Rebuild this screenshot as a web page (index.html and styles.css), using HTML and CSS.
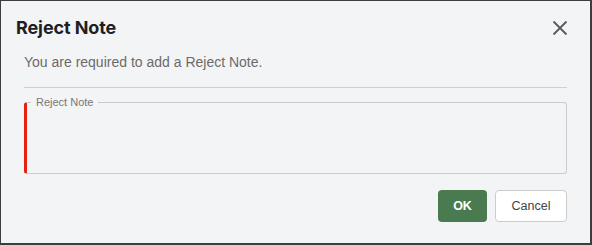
FILE: index.html
```html
<!DOCTYPE html>
<html>
<head>
<meta charset="utf-8">
<link rel="stylesheet" href="styles.css">
</head>
<body>
<div class="dialog">
  <div class="header">
    <h1 class="title">Reject Note</h1>
    <button class="close" aria-label="Close">
      <svg width="16" height="16" viewBox="0 0 16 16"><path d="M1.5 1.5 L14.5 14.5 M14.5 1.5 L1.5 14.5" stroke="#5a5a5a" stroke-width="1.8" fill="none"/></svg>
    </button>
  </div>
  <div class="body">
    <p class="message">You are required to add a Reject Note.</p>
    <div class="divider"></div>
    <fieldset class="field">
      <legend class="legend">Reject Note</legend>
      <textarea class="input"></textarea>
    </fieldset>
    <div class="actions">
      <button class="btn btn-ok">OK</button>
      <button class="btn btn-cancel">Cancel</button>
    </div>
  </div>
</div>
</body>
</html>
```
FILE: styles.css
```css
* { box-sizing: border-box; }
html, body { margin: 0; padding: 0; }
body {
  font-family: "Liberation Sans", Arial, sans-serif;
  background: #f3f4f6;
}
.dialog {
  width: 592px;
  height: 245px;
  background: #f3f4f6;
  border-style: solid;
  border-color: #3d3d3d;
  border-width: 1px 2px 2px 1px;
  display: flex;
  flex-direction: column;
}
.header {
  display: flex;
  align-items: flex-start;
  justify-content: space-between;
  padding: 15px 22px 0 15px;
}
.title {
  margin: 0;
  font-family: Inter, "Liberation Sans", sans-serif;
  font-size: 18px;
  line-height: 24px;
  font-weight: 700;
  color: #1f1f1f;
  letter-spacing: -0.1px;
}
.close {
  border: none;
  background: transparent;
  padding: 0;
  margin-top: 4px;
  width: 16px;
  height: 16px;
  display: flex;
}
.body {
  padding: 0 22px 0 23px;
  display: flex;
  flex-direction: column;
}
.message {
  margin: 12px 0 0;
  font-size: 14px;
  line-height: 20px;
  color: #6b6b6b;
}
.divider {
  height: 1px;
  background: #cfcfcf;
  margin-top: 15px;
  margin-right: 1px;
}
.field {
  margin: 8px 1px 0 0;
  padding: 0;
  height: 78px;
  border: 1px solid #cbcbcb;
  border-left: 3px solid #e8200f;
  border-radius: 3px;
  min-width: 0;
}
.legend {
  margin-left: 4px;
  padding: 0 5px;
  font-size: 11px;
  line-height: 12px;
  color: #777;
}
.input {
  display: block;
  width: 100%;
  height: 60px;
  border: none;
  background: transparent;
  resize: none;
  outline: none;
}
.actions {
  display: flex;
  justify-content: flex-end;
  gap: 8px;
  margin-top: 16px;
  margin-right: 1px;
}
.btn {
  height: 32px;
  border-radius: 4px;
  font-family: "Liberation Sans", Arial, sans-serif;
  font-size: 12.5px;
  cursor: pointer;
}
.btn-ok {
  width: 49px;
  background: #4a7a4f;
  color: #fff;
  border: none;
  font-weight: 700;
  font-size: 12.5px;
}
.btn-cancel {
  width: 72px;
  background: #fff;
  color: #444;
  border: 1px solid #cccccc;
}
```
